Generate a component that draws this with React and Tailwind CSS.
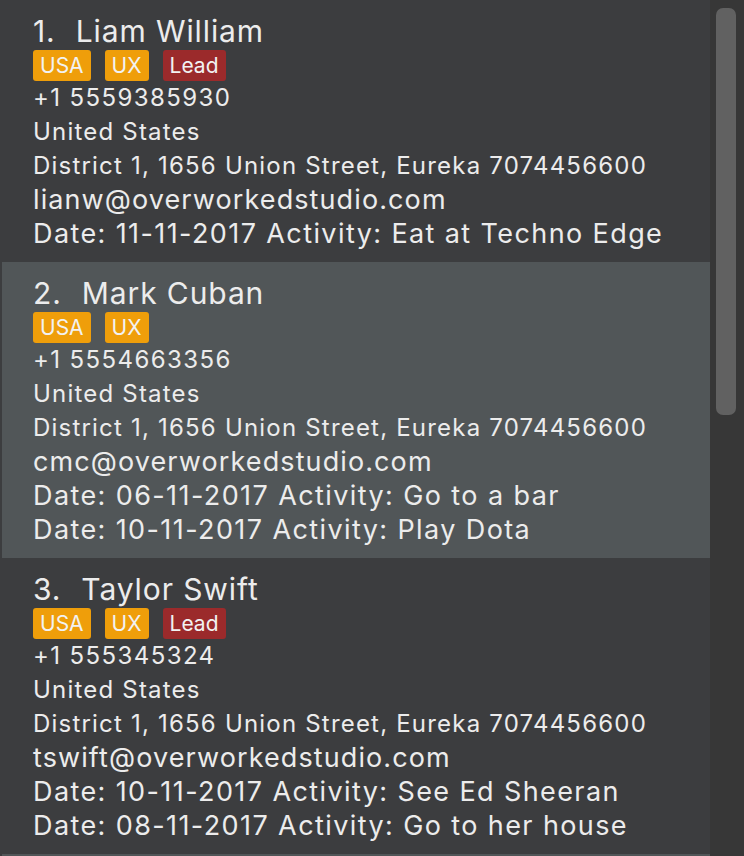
import React from "react";

const people = [
  {
    name: "Liam William",
    tags: ["USA", "UX", "Lead"],
    phone: "+1 5559385930",
    country: "United States",
    address: "District 1, 1656 Union Street, Eureka 7074456600",
    email: "lianw@overworkedstudio.com",
    activities: ["Date: 11-11-2017 Activity: Eat at Techno Edge"],
  },
  {
    name: "Mark Cuban",
    tags: ["USA", "UX"],
    phone: "+1 5554663356",
    country: "United States",
    address: "District 1, 1656 Union Street, Eureka 7074456600",
    email: "cmc@overworkedstudio.com",
    activities: [
      "Date: 06-11-2017 Activity: Go to a bar",
      "Date: 10-11-2017 Activity: Play Dota",
    ],
  },
  {
    name: "Taylor Swift",
    tags: ["USA", "UX", "Lead"],
    phone: "+1 555345324",
    country: "United States",
    address: "District 1, 1656 Union Street, Eureka 7074456600",
    email: "tswift@overworkedstudio.com",
    activities: [
      "Date: 10-11-2017 Activity: See Ed Sheeran",
      "Date: 08-11-2017 Activity: Go to her house",
    ],
  },
];

const Tag = ({ label }) => (
  <span
    className={`h-[31px] px-[7px] rounded-[3px] text-[21px] leading-[31px] text-[#f2f2f2] ${
      label === "Lead" ? "bg-[#9b2a2b]" : "bg-[#ef9e0a]"
    }`}
  >
    {label}
  </span>
);

const PersonCard = ({ person, index }) => (
  <div
    className={`pl-[31px] pt-[12px] pb-[11px] text-[#ececec] ${
      index % 2 === 1 ? "bg-[#515658]" : "bg-[#3c3d3f]"
    }`}
  >
    {/* Name row */}
    <div className="flex gap-[20px] h-[38px] text-[30px] leading-[38px] tracking-[0.9px]">
      <span>{index + 1}.</span>
      <span>{person.name}</span>
    </div>

    {/* Tags */}
    <div className="flex gap-[14px] h-[31px]">
      {person.tags.map((t) => (
        <Tag key={t} label={t} />
      ))}
    </div>

    {/* Details */}
    <div className="text-[24px] leading-[34px] tracking-[1.2px]">
      <div className="tracking-[1.4px]">{person.phone}</div>
      <div>{person.country}</div>
      <div>{person.address}</div>
    </div>
    <div className="text-[27px] leading-[34px] tracking-[1.4px]">
      <div className="tracking-[1.1px]">{person.email}</div>
      {person.activities.map((a) => (
        <div key={a}>{a}</div>
      ))}
    </div>
  </div>
);

export default function App() {
  return (
    <div
      className="flex w-[744px] h-[856px] overflow-hidden bg-[#373737]"
      style={{ fontFamily: "Inter, 'Noto Sans', sans-serif" }}
    >
      <div className="w-[710px] h-full bg-[#3c3d3f] pl-[2px] overflow-hidden">
        {people.map((p, i) => (
          <PersonCard key={p.name} person={p} index={i} />
        ))}
        {/* next row peeking in at the bottom */}
        <div className="h-[10px] bg-[#515658]" />
      </div>

      {/* Scrollbar */}
      <div className="w-[34px] h-full pt-[8px] pl-[6px]">
        <div className="w-[20px] h-[407px] rounded-[7px] bg-[#616161]" />
      </div>
    </div>
  );
}
